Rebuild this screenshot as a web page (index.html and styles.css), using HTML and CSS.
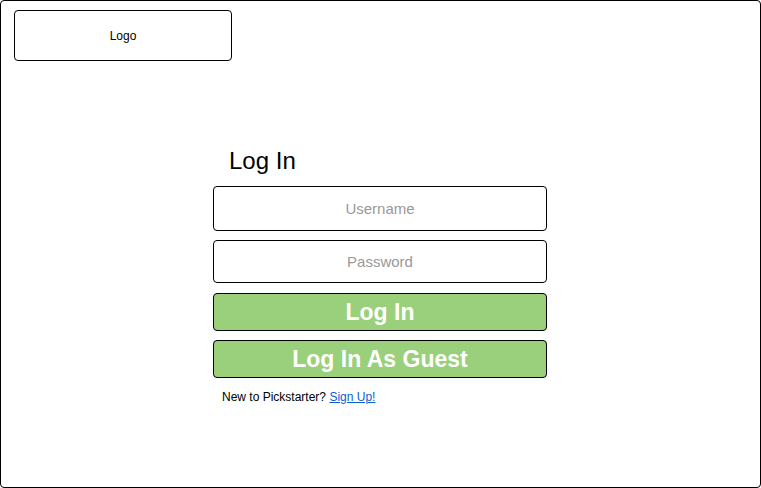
FILE: index.html
```html
<!DOCTYPE html>
<html>
<head>
<meta charset="utf-8">
<link rel="stylesheet" href="styles.css">
</head>
<body>
<div class="frame">
  <div class="logo">Logo</div>
  <form class="login">
    <h1 class="title">Log In</h1>
    <div class="field field-user">Username</div>
    <div class="field field-pass">Password</div>
    <div class="btn">Log In</div>
    <div class="btn btn-guest">Log In As Guest</div>
    <p class="signup">New to Pickstarter? <a href="#">Sign Up!</a></p>
  </form>
</div>
</body>
</html>
```
FILE: styles.css
```css
html, body {
  margin: 0;
  padding: 0;
  background: #fff;
  font-family: "Liberation Sans", Arial, Helvetica, sans-serif;
  color: #000;
}
.frame {
  box-sizing: border-box;
  width: 761px;
  height: 488px;
  border: 1px solid #000;
  border-radius: 4px;
  padding: 9px 0 0 13px;
}
.logo {
  box-sizing: border-box;
  width: 218px;
  height: 51px;
  border: 1px solid #000;
  border-radius: 4px;
  display: flex;
  align-items: center;
  justify-content: center;
  font-size: 12px;
}
.login {
  margin: 86px 0 0 199px;
  width: 334px;
  display: flex;
  flex-direction: column;
}
.title {
  margin: 0 0 11px 16px;
  font-size: 24px;
  font-weight: normal;
  line-height: 28px;
}
.field {
  box-sizing: border-box;
  height: 45px;
  border: 1px solid #000;
  border-radius: 4px;
  display: flex;
  align-items: center;
  justify-content: center;
  font-size: 15px;
  color: #999;
}
.field-pass {
  margin-top: 9px;
  height: 43px;
}
.btn {
  box-sizing: border-box;
  height: 38px;
  margin-top: 10px;
  border: 1px solid #000;
  border-radius: 4px;
  background: #9ad07b;
  color: #fff;
  font-size: 23px;
  font-weight: bold;
  display: flex;
  align-items: center;
  justify-content: center;
}
.btn-guest {
  margin-top: 9px;
}
.signup {
  margin: 12px 0 0 9px;
  font-size: 12px;
  line-height: 14px;
}
.signup a {
  color: #0b5fd6;
}
```
